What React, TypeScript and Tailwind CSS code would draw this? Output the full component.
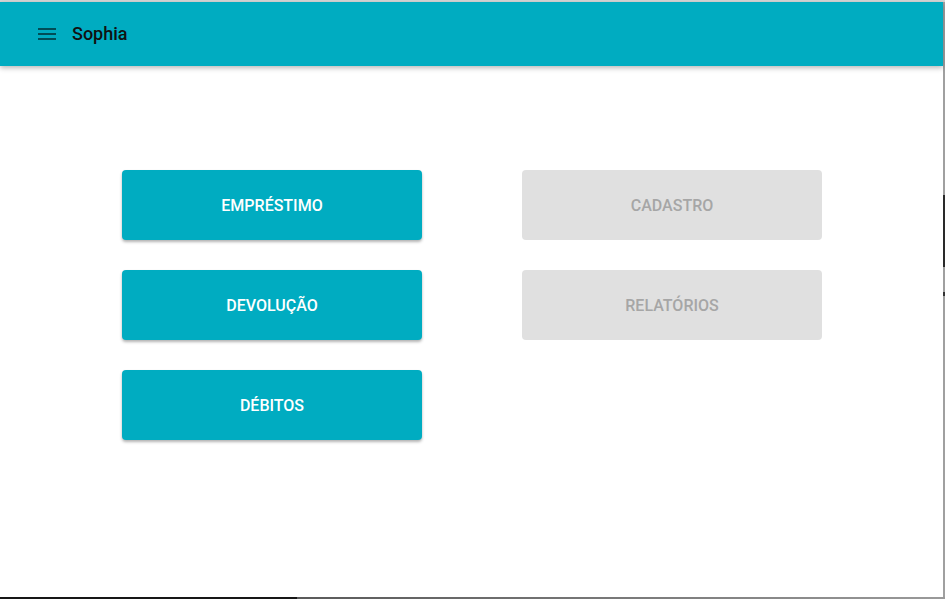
import React from "react";

const actions = [
  { label: "Empréstimo", enabled: true },
  { label: "Cadastro", enabled: false },
  { label: "Devolução", enabled: true },
  { label: "Relatórios", enabled: false },
  { label: "Débitos", enabled: true },
];

function MenuIcon() {
  return (
    <svg width="24" height="24" viewBox="0 0 24 24" className="text-black/55">
      <path d="M3 18h18v-2H3v2zm0-5h18v-2H3v2zm0-7v2h18V6H3z" fill="currentColor" />
    </svg>
  );
}

function ActionButton({ label, enabled }: { label: string; enabled: boolean }) {
  return (
    <button
      disabled={!enabled}
      className={
        enabled
          ? "flex h-[70px] w-[300px] items-center justify-center rounded-[4px] bg-[#00acc1] pt-[2px] text-[16px] font-medium uppercase text-white shadow-[0_2px_3px_rgba(0,0,0,0.3)]"
          : "flex h-[70px] w-[300px] items-center justify-center rounded-[4px] bg-[#e0e0e0] pt-[2px] text-[16px] font-medium uppercase text-[#a6a6a6]"
      }
    >
      {label}
    </button>
  );
}

export default function App() {
  return (
    <div className="flex h-[599px] w-[945px] flex-col bg-[#9e9e9e] font-['Roboto',sans-serif]">
      <div className="h-[2px] bg-[#d6d6d6]" />
      <div className="flex flex-1">
        <div className="flex w-[943px] flex-col bg-white">
          <header className="relative z-10 flex h-16 items-center gap-[13px] bg-[#00acc1] pb-[1px] pl-[35px] shadow-[0_2px_5px_rgba(0,0,0,0.28)]">
            <MenuIcon />
            <span className="text-[18px] font-medium text-[#111]">Sophia</span>
          </header>
          <main className="flex-1 pl-[122px] pt-[104px]">
            <div className="grid grid-cols-[300px_300px] gap-x-[100px] gap-y-[30px]">
              {actions.map((a) => (
                <ActionButton key={a.label} label={a.label} enabled={a.enabled} />
              ))}
            </div>
          </main>
        </div>
        <div className="flex w-[2px] flex-col">
          <div className="h-[193px] bg-[#a0a0a0]" />
          <div className="h-[72px] bg-[#2a2a2a]" />
          <div className="h-[25px] bg-[#a0a0a0]" />
          <div className="h-[4px] bg-[#333]" />
          <div className="flex-1 bg-[#a0a0a0]" />
        </div>
      </div>
      <div className="flex h-[2px]">
        <div className="w-[297px] bg-[#161616]" />
        <div className="flex-1 bg-gradient-to-r from-[#5a5a5a] to-[#9a9a9a]" />
      </div>
    </div>
  );
}
